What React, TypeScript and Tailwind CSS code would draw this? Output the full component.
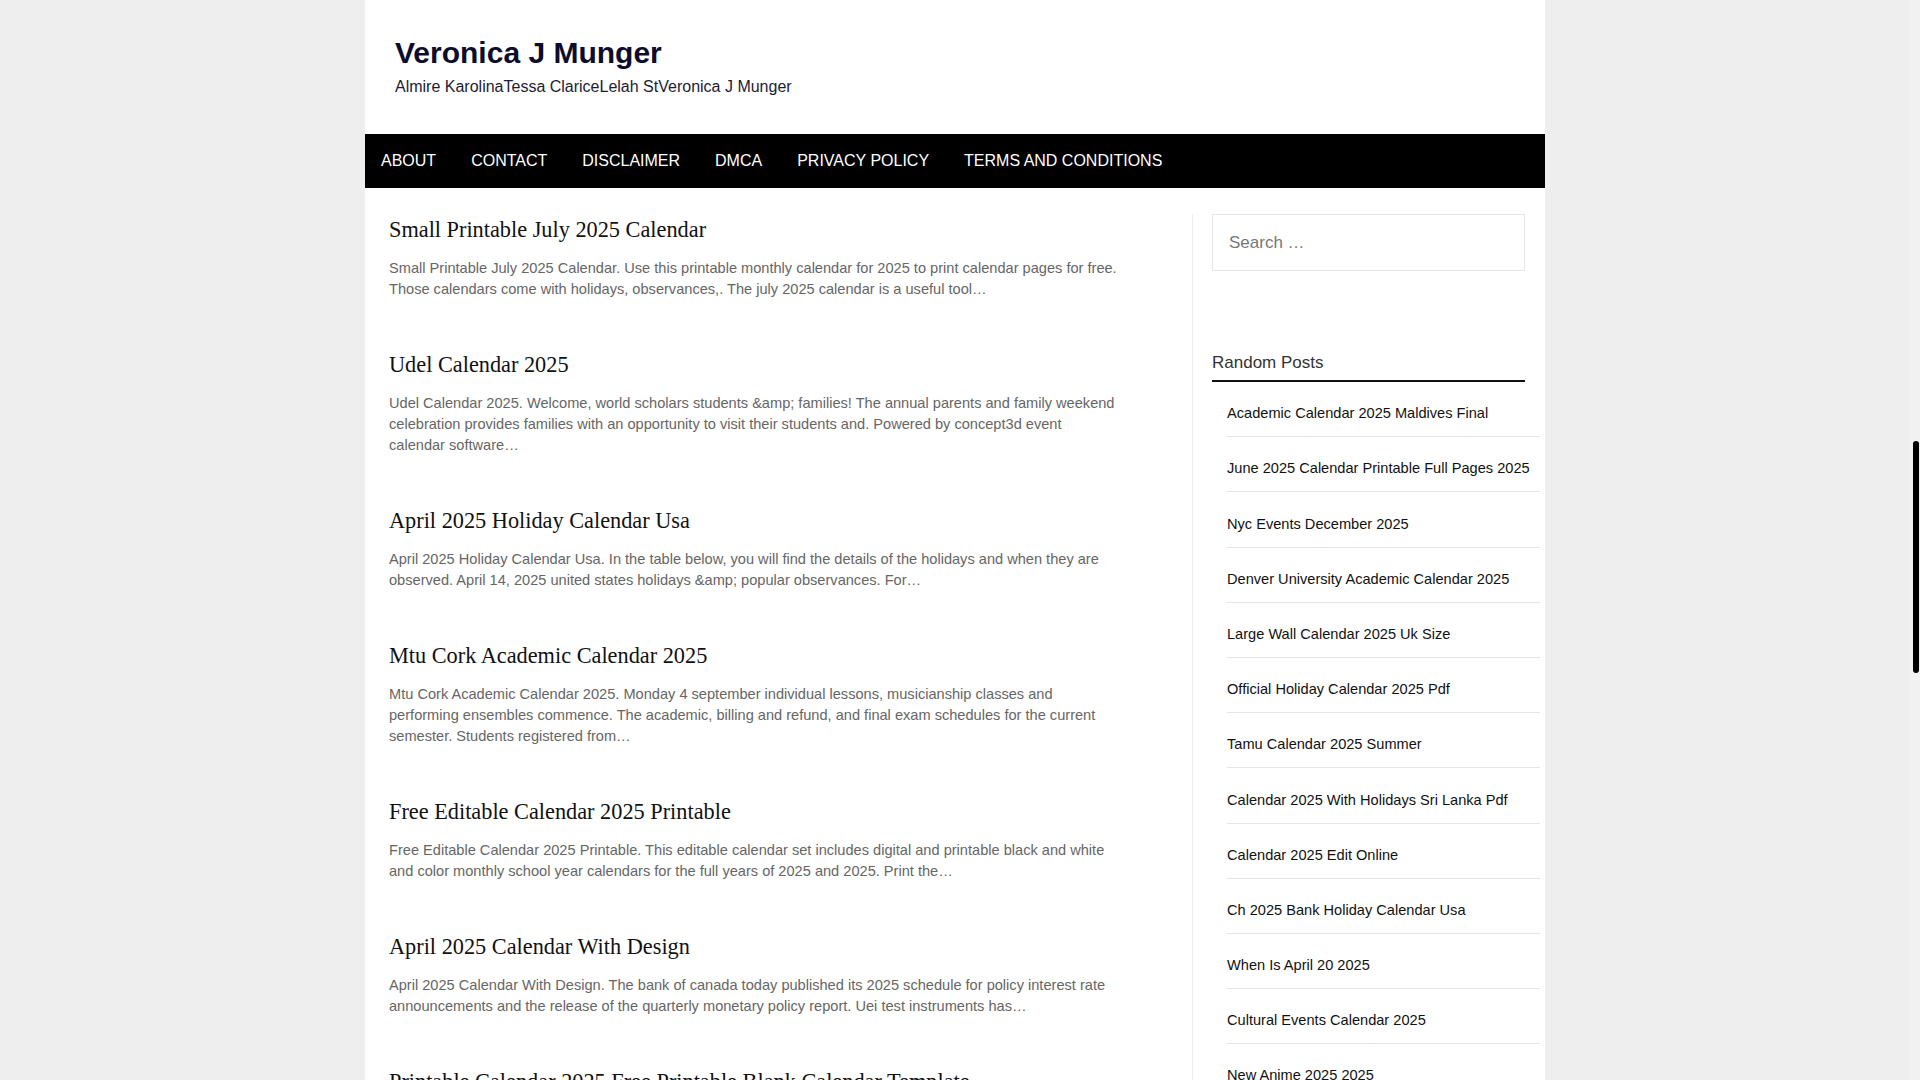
import React from "react";

const posts = [
  {
    title: "Small Printable July 2025 Calendar",
    excerpt:
      "Small Printable July 2025 Calendar. Use this printable monthly calendar for 2025 to print calendar pages for free. Those calendars come with holidays, observances,. The july 2025 calendar is a useful tool…",
  },
  {
    title: "Udel Calendar 2025",
    excerpt:
      "Udel Calendar 2025. Welcome, world scholars students &amp; families! The annual parents and family weekend celebration provides families with an opportunity to visit their students and. Powered by concept3d event calendar software…",
  },
  {
    title: "April 2025 Holiday Calendar Usa",
    excerpt:
      "April 2025 Holiday Calendar Usa. In the table below, you will find the details of the holidays and when they are observed. April 14, 2025 united states holidays &amp; popular observances. For…",
  },
  {
    title: "Mtu Cork Academic Calendar 2025",
    excerpt:
      "Mtu Cork Academic Calendar 2025. Monday 4 september individual lessons, musicianship classes and performing ensembles commence. The academic, billing and refund, and final exam schedules for the current semester. Students registered from…",
  },
  {
    title: "Free Editable Calendar 2025 Printable",
    excerpt:
      "Free Editable Calendar 2025 Printable. This editable calendar set includes digital and printable black and white and color monthly school year calendars for the full years of 2025 and 2025. Print the…",
  },
  {
    title: "April 2025 Calendar With Design",
    excerpt:
      "April 2025 Calendar With Design. The bank of canada today published its 2025 schedule for policy interest rate announcements and the release of the quarterly monetary policy report. Uei test instruments has…",
  },
  {
    title: "Printable Calendar 2025 Free Printable Blank Calendar Template",
    excerpt:
      "Printable Calendar 2025 Free Printable Blank Calendar Template. Download free printable blank calendar templates for 2025 with holidays and notes…",
  },
];

const randomPosts = [
  "Academic Calendar 2025 Maldives Final",
  "June 2025 Calendar Printable Full Pages 2025",
  "Nyc Events December 2025",
  "Denver University Academic Calendar 2025",
  "Large Wall Calendar 2025 Uk Size",
  "Official Holiday Calendar 2025 Pdf",
  "Tamu Calendar 2025 Summer",
  "Calendar 2025 With Holidays Sri Lanka Pdf",
  "Calendar 2025 Edit Online",
  "Ch 2025 Bank Holiday Calendar Usa",
  "When Is April 20 2025",
  "Cultural Events Calendar 2025",
  "New Anime 2025 2025",
];

const menu = ["About", "Contact", "Disclaimer", "DMCA", "Privacy Policy", "Terms and Conditions"];

export default function App() {
  return (
    <div className="flex h-[1080px] w-full overflow-hidden bg-[#eeeeee] font-['Liberation_Sans',Arial,sans-serif]">
      <div className="h-full flex-1 overflow-hidden">
        <div className="mx-auto w-[1180px] bg-white">
          <header className="px-[30px] pt-[35px] pb-[35px]">
            <h1 className="text-[30px] font-bold leading-[36px] text-[#0d0d2b]">Veronica J Munger</h1>
            <p className="mt-[4px] text-[16px] leading-[24px] text-[#1c1c34]">
              Almire KarolinaTessa ClariceLelah StVeronica J Munger
            </p>
          </header>

          <nav className="flex h-[54px] items-center gap-[35px] bg-black pl-4">
            {menu.map((m) => (
              <a key={m} href="#" className="text-[16px] uppercase leading-none text-white">
                {m}
              </a>
            ))}
          </nav>

          <div className="flex pt-[26px]">
            <main className="w-[827px] shrink-0 pt-px pl-6">
              {posts.map((p) => (
                <article key={p.title} className="mb-[50px] w-[730px]">
                  <h2 className="font-['Liberation_Serif','Times_New_Roman',serif] text-[22.3px] leading-[29px] text-[#111]">
                    {p.title}
                  </h2>
                  <p className="mt-[14px] text-[14.6px] leading-[21px] text-[#666]">{p.excerpt}</p>
                </article>
              ))}
            </main>

            <aside className="w-[353px] shrink-0 border-l border-[#eeeeee] pl-[19px]">
              <input
                type="search"
                placeholder="Search …"
                className="block h-[57px] w-[313px] border border-[#e6e6e6] px-4 text-[17px] text-[#333] outline-none placeholder:text-[#777]"
              />

              <section className="mt-[80px]">
                <h3 className="w-[313px] border-b-2 border-[#111] pb-[5px] text-[17px] leading-[24px] text-[#333]">
                  Random Posts
                </h3>
                <ul className="ml-[15px] mr-[5px]">
                  {randomPosts.map((r) => (
                    <li
                      key={r}
                      className="border-b border-[#e5e5e5] pt-[20.2px] pb-[12px] text-[14.6px] leading-[22px]"
                    >
                      <a href="#" className="block text-[#111]">
                        {r}
                      </a>
                    </li>
                  ))}
                </ul>
              </section>
            </aside>
          </div>
        </div>
      </div>

      <div className="h-full w-[10px] shrink-0 bg-[#f1f1f1]">
        <div className="ml-[3px] mt-[441px] h-[232px] w-[6px] rounded-[3px] bg-black" />
      </div>
    </div>
  );
}
